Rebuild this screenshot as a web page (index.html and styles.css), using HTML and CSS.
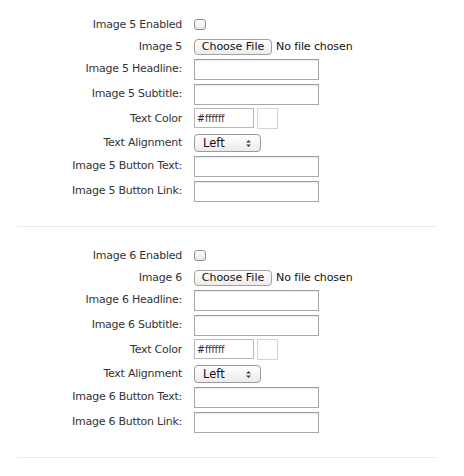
FILE: index.html
```html
<!DOCTYPE html>
<html>
<head>
<meta charset="utf-8">
<link rel="stylesheet" href="styles.css">
</head>
<body>
<div class="page">
  <section class="group">
    <div class="row row-check"><label class="lbl">Image 5 Enabled</label><div class="field"><input type="checkbox" class="chk"></div></div>
    <div class="row row-file"><label class="lbl">Image 5</label><div class="field"><span class="btn">Choose File</span><span class="nofile">No file chosen</span></div></div>
    <div class="row"><label class="lbl">Image 5 Headline:</label><div class="field"><input type="text" class="txt"></div></div>
    <div class="row"><label class="lbl">Image 5 Subtitle:</label><div class="field"><input type="text" class="txt"></div></div>
    <div class="row row-color"><label class="lbl">Text Color</label><div class="field field-color"><input type="text" class="hex" value="#ffffff"><span class="swatch"></span></div></div>
    <div class="row row-select"><label class="lbl">Text Alignment</label><div class="field"><span class="sel">Left<svg class="arrows" width="7" height="9" viewBox="0 0 7 9"><path d="M1 3.5 L3.5 1 L6 3.5 Z M1 5.5 L3.5 8 L6 5.5 Z" fill="#444"/></svg></span></div></div>
    <div class="row"><label class="lbl">Image 5 Button Text:</label><div class="field"><input type="text" class="txt"></div></div>
    <div class="row"><label class="lbl">Image 5 Button Link:</label><div class="field"><input type="text" class="txt"></div></div>
    <hr class="sep">
  </section>
  <section class="group">
    <div class="row row-check"><label class="lbl">Image 6 Enabled</label><div class="field"><input type="checkbox" class="chk"></div></div>
    <div class="row row-file"><label class="lbl">Image 6</label><div class="field"><span class="btn">Choose File</span><span class="nofile">No file chosen</span></div></div>
    <div class="row"><label class="lbl">Image 6 Headline:</label><div class="field"><input type="text" class="txt"></div></div>
    <div class="row"><label class="lbl">Image 6 Subtitle:</label><div class="field"><input type="text" class="txt"></div></div>
    <div class="row row-color"><label class="lbl">Text Color</label><div class="field field-color"><input type="text" class="hex" value="#ffffff"><span class="swatch"></span></div></div>
    <div class="row row-select"><label class="lbl">Text Alignment</label><div class="field"><span class="sel">Left<svg class="arrows" width="7" height="9" viewBox="0 0 7 9"><path d="M1 3.5 L3.5 1 L6 3.5 Z M1 5.5 L3.5 8 L6 5.5 Z" fill="#444"/></svg></span></div></div>
    <div class="row"><label class="lbl">Image 6 Button Text:</label><div class="field"><input type="text" class="txt"></div></div>
    <div class="row"><label class="lbl">Image 6 Button Link:</label><div class="field"><input type="text" class="txt"></div></div>
    <hr class="sep">
  </section>
</div>
</body>
</html>
```

FILE: styles.css
```css
html, body {
  margin: 0;
  padding: 0;
  background: #fff;
}
body {
  font-family: "DejaVu Sans", "Liberation Sans", sans-serif;
  font-size: 11px;
  color: #333;
}
.page {
  padding: 19px 28px 0 17px;
}
.group {
  display: flex;
  flex-direction: column;
}
.group + .group {
  margin-top: 23px;
}
.row {
  display: flex;
  align-items: center;
  gap: 12px;
  height: 20px;
  margin-top: 5px;
}
.row-check {
  height: 11px;
  margin-top: 0;
}
.row-file {
  height: 15px;
  margin-top: 9px;
}
.row-color {
  height: 21px;
  margin-top: 4px;
}
.row-select {
  height: 18px;
  margin-top: 5px;
}
.row-select + .row {
  margin-top: 4px;
}
.lbl {
  width: 165px;
  flex: none;
  text-align: right;
  white-space: nowrap;
  line-height: 14px;
  letter-spacing: -0.25px;
}
.field {
  display: flex;
  align-items: center;
  height: 100%;
}
.chk {
  appearance: none;
  -webkit-appearance: none;
  margin: 0;
  width: 12px;
  height: 11px;
  border: 1px solid #8f8f8f;
  border-radius: 3px;
  background: linear-gradient(#fdfdfd, #e9e9e9);
  box-sizing: border-box;
}
.btn {
  display: inline-flex;
  align-items: center;
  box-sizing: border-box;
  height: 16px;
  width: 78px;
  justify-content: center;
  border: 1px solid #a0a0a0;
  border-radius: 4px;
  background: linear-gradient(#ffffff, #ececec);
  color: #111;
  font-size: 11px;
}
.nofile {
  margin-left: 4px;
  color: #111;
  font-size: 11px;
  letter-spacing: -0.1px;
}
.txt {
  box-sizing: border-box;
  width: 125px;
  height: 21px;
  margin: 0;
  border: 1px solid #a9a9a9;
  border-top-color: #9a9a9a;
  box-shadow: inset 0 1px 1px rgba(0,0,0,0.08);
  padding: 0 2px;
  background: #fff;
  font: inherit;
}
.field-color {
  align-items: flex-start;
  gap: 3px;
}
.hex {
  box-sizing: border-box;
  width: 60px;
  height: 20px;
  margin: 0;
  border: 1px solid #b8b8b8;
  padding: 0 2px;
  font-family: "DejaVu Sans Condensed", "DejaVu Sans", sans-serif;
  font-size: 10.5px;
  color: #3a2a2a;
  background: #fff;
}
.swatch {
  box-sizing: border-box;
  width: 21px;
  height: 21px;
  border: 1px solid #d4d4d4;
  background: #fff;
}
.sel {
  position: relative;
  display: inline-flex;
  align-items: center;
  box-sizing: border-box;
  width: 67px;
  height: 18px;
  padding-left: 8px;
  border: 1px solid #9a9a9a;
  border-radius: 4px;
  background: linear-gradient(#ffffff, #ebebeb);
  color: #111;
  font-size: 11.5px;
}
.arrows {
  position: absolute;
  right: 8px;
  top: 4px;
}
.sep {
  margin: 25px 0 0 0;
  border: 0;
  height: 1px;
  background: #ebebeb;
}
```
